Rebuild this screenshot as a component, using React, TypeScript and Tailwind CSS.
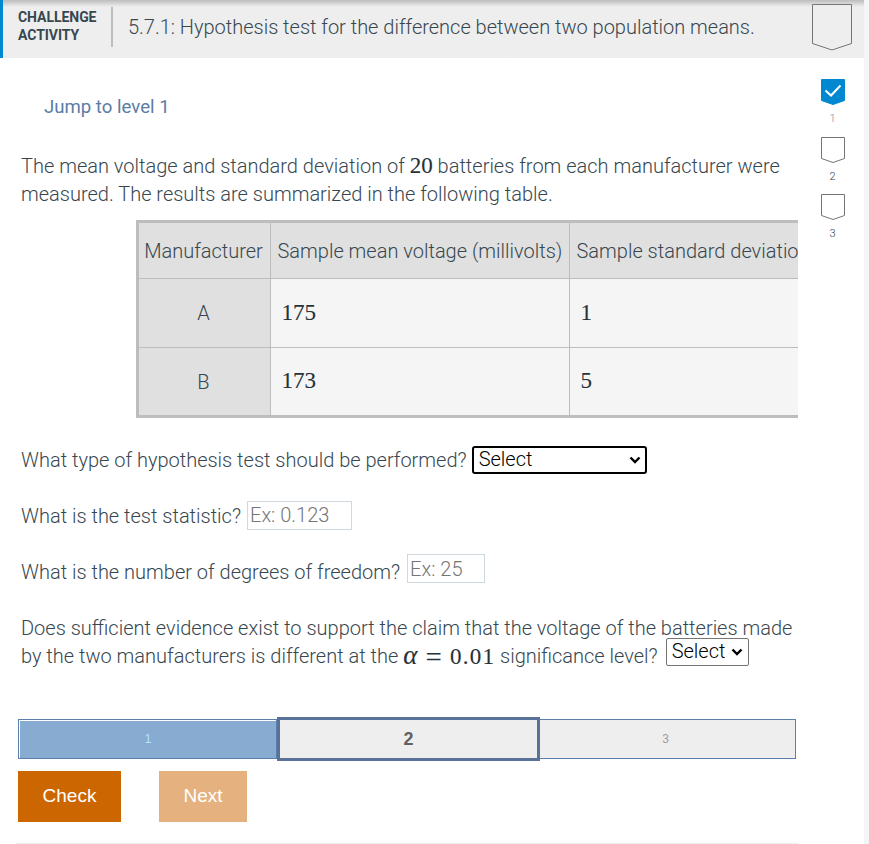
const math = "font-['KaTeX_Main','Liberation_Serif',serif] text-[23px] leading-none font-normal text-[#263238] [-webkit-text-stroke:0.12px_#263238]";

function Shield({ className, filled }: { className: string; filled?: boolean }) {
  return (
    <svg viewBox="0 0 24 26" className={className} aria-hidden="true">
      <path
        d="M0.5 0.5H23.5V21.5L12 25.5L0.5 21.5Z"
        fill={filled ? "#0288d1" : "#fff"}
        stroke={filled ? "#0288d1" : "#757575"}
        strokeWidth="1"
      />
      {filled ? (
        <path d="M4.5 11.5L10 16.5L19.5 6.5" fill="none" stroke="#fff" strokeWidth="2" />
      ) : null}
    </svg>
  );
}

function LevelMark({ n, filled }: { n: number; filled?: boolean }) {
  return (
    <div className="flex h-[57.5px] w-[24px] flex-col items-center">
      <Shield className="h-[26px] w-[24px]" filled={filled} />
      <span className={`mt-[7px] pr-[1px] text-[11px] leading-[14px] ${filled ? "text-[#7a8da6]" : "text-[#37474f]"}`}>{n}</span>
    </div>
  );
}

function SelectBox({ className, arrow }: { className: string; arrow: string }) {
  return (
    <span className="relative inline-block">
      <select className={`block appearance-none bg-white pb-[2px] text-[20px] leading-[20px] font-light text-black ${className}`}>
        <option>Select</option>
      </select>
      <svg viewBox="0 0 12 8" className={`pointer-events-none absolute top-1/2 h-[8px] w-[12px] -translate-y-1/2 ${arrow}`} aria-hidden="true">
        <path d="M1.5 1.5L6 6L10.5 1.5" fill="none" stroke="#000" strokeWidth="2.4" />
      </svg>
    </span>
  );
}

const ROWS = [
  ["A", "175", "1"],
  ["B", "173", "5"],
];

export default function App() {
  return (
    <div className="flex min-h-[844px] bg-[#f5f5f5] font-['Roboto',sans-serif] text-[20px] font-light text-[#37474f]">
      <div className="w-[864px] shrink-0 bg-white">
        {/* activity header */}
        <header className="flex h-[58px] items-center border-l-[3px] border-[#0288d1] bg-gradient-to-b from-[#bdbdbd] from-0% via-[#eeeeee] via-[12%] to-[#eeeeee]">
          <div className="mb-[6px] w-[108px] pl-[15px] text-[14px] leading-[18px] font-bold tracking-[-0.05px] text-[#37474f]">
            CHALLENGE
            <br />
            ACTIVITY
          </div>
          <div className="mt-[-5px] h-[40px] w-[2px] bg-[#bdbdbd]" />
          <h1 className="mb-[4px] ml-[15px] flex-1 text-[20px] font-light tracking-[-0.01px] whitespace-nowrap">
            5.7.1: Hypothesis test for the difference between two population means.
          </h1>
          <svg viewBox="0 0 40 47" className="mr-[12px] mb-[4px] h-[47px] w-[40px]" aria-hidden="true">
            <path d="M0.5 0.5H39.5V39.5L20 46L0.5 39.5Z" fill="#eee" stroke="#757575" strokeWidth="1" />
          </svg>
        </header>

        <div className="flex">
          <main className="w-[798px] shrink-0">
            <div className="pt-[36px] pl-[44px] text-[18.6px] leading-[26px] font-normal text-[#5b7da6]">Jump to level 1</div>

            <p className="mt-[32px] ml-[21px] leading-[28px]">
              The mean voltage and standard deviation of <span className={math}>20</span> batteries from each manufacturer were
              <br />
              measured. The results are summarized in the following table.
            </p>

            <div className="mt-[12px] ml-[136px] overflow-hidden">
              <table className="w-[772px] table-fixed border-collapse border-[3px] border-[#bdbdbd] whitespace-nowrap">
                <thead>
                  <tr className="h-[57px] bg-[#e0e0e0]">
                    <th className="w-[133px] border border-[#bdbdbd] pr-[2px] font-light">Manufacturer</th>
                    <th className="w-[299px] border border-[#bdbdbd] px-[6.5px] text-left font-light">Sample mean voltage (millivolts)</th>
                    <th className="w-[340px] border border-[#bdbdbd] px-[6.5px] text-left font-light">Sample standard deviation (millivolts)</th>
                  </tr>
                </thead>
                <tbody>
                  {ROWS.map(([name, mean, sd]) => (
                    <tr key={name} className="h-[69px]">
                      <td className="border border-[#bdbdbd] bg-[#e0e0e0] pr-[2px] text-center">{name}</td>
                      <td className={`border border-[#bdbdbd] bg-[#f5f5f5] px-[10.5px] pb-[2px] ${math}`}>{mean}</td>
                      <td className={`border border-[#bdbdbd] bg-[#f5f5f5] px-[10.5px] pb-[2px] ${math}`}>{sd}</td>
                    </tr>
                  ))}
                </tbody>
              </table>
            </div>

            <div className="mt-[27px] ml-[21px] flex h-[30px] items-center">
              What type of hypothesis test should be performed?
              <SelectBox className="ml-[5px] h-[28px] w-[175px] rounded-[3px] border-2 border-black pl-[5px]" arrow="right-[6px]" />
            </div>

            <div className="mt-[26px] ml-[21px] flex h-[30px] items-center">
              What is the test statistic?
              <input placeholder="Ex: 0.123" className="mb-[2px] ml-[6px] h-[29px] w-[105px] border border-[#cfd8dc] px-[2px] placeholder:text-[#757575]" />
            </div>

            <div className="mt-[26px] ml-[21px] flex h-[30px] items-center">
              What is the number of degrees of freedom?
              <input placeholder="Ex: 25" className="mb-[7px] ml-[7px] h-[29px] w-[78px] border border-[#cfd8dc] px-[2px] placeholder:text-[#757575]" />
            </div>

            <div className="mt-[27px] ml-[21px] leading-[28px]">
              Does sufficient evidence exist to support the claim that the voltage of the batteries made
              <br />
              <span className="inline-flex h-[28px] items-center">
                by the two manufacturers is different at the&nbsp;
                <span className={`${math} tracking-[1.2px] whitespace-pre`}>
                  <i className="text-[27px] leading-[0]">α</i>
                  <span className="relative top-[3px] mx-[7px] text-[29px] leading-[0] font-light [-webkit-text-stroke:0]">=</span>
                  0.01
                </span>
                &nbsp;significance level?
                <SelectBox className="relative top-[-4px] ml-[8px] h-[28px] w-[83px] rounded-[2px] border border-[#757575] pl-[5px]" arrow="right-[6px] mt-[-4px]" />
              </span>
            </div>

            {/* level bar */}
            <div className="mt-[47px] ml-[18px] flex h-[44px] w-[778px] items-center font-['Liberation_Sans',sans-serif]">
              <div className="flex h-[40px] w-[259px] items-center justify-center border border-[#5b80ab] bg-[#87abd1] pl-[1px] text-[12px] font-normal text-[#b3e5fc] shadow-[inset_1px_1px_0_#fff]">1</div>
              <div className="flex h-[44px] w-[263px] items-center justify-center border-[3px] border-[#5a7298] bg-[#eeeeee] text-[18px] font-bold text-[#616161]">2</div>
              <div className="flex h-[40px] flex-1 items-center justify-center border border-l-0 border-[#5b80ab] bg-[#eeeeee] pr-[4px] text-[12px] font-normal text-[#9e9e9e]">3</div>
            </div>

            <div className="mt-[10px] ml-[18px] flex gap-[38px] font-['Liberation_Sans',sans-serif] text-[19px] font-normal text-white">
              <button type="button" className="h-[51px] w-[103px] bg-[#cc6600]">Check</button>
              <button type="button" className="h-[51px] w-[88px] bg-[#e5b27f]">Next</button>
            </div>

            <div className="mt-[21px] ml-[16px] h-px bg-[#eeeeee]" />
          </main>

          <aside className="pt-[21px] pl-[23px]">
            <LevelMark n={1} filled />
            <LevelMark n={2} />
            <LevelMark n={3} />
          </aside>
        </div>
      </div>
    </div>
  );
}
